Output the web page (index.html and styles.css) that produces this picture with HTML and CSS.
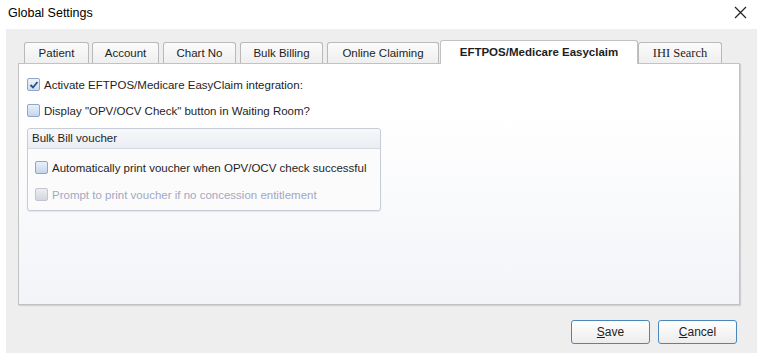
FILE: index.html
```html
<!DOCTYPE html>
<html lang="en">
<head>
  <meta charset="UTF-8">
  <title>Global Settings</title>
  <link rel="stylesheet" href="styles.css">
</head>
<body>
  <div class="titlebar">
    <span class="title">Global Settings</span>
    <svg class="close" width="13" height="13" viewBox="0 0 13 13">
      <path d="M1 1 L12 12 M12 1 L1 12" stroke="#222" stroke-width="1.2" fill="none"/>
    </svg>
  </div>

  <div class="dialog">
    <div class="tabs">
      <div class="tab t-patient">Patient</div>
      <div class="tab t-account">Account</div>
      <div class="tab t-chart">Chart No</div>
      <div class="tab t-bulk">Bulk Billing</div>
      <div class="tab t-online">Online Claiming</div>
      <div class="tab active t-eftpos">EFTPOS/Medicare Easyclaim</div>
      <div class="tab t-ihi">IHI Search</div>
    </div>

    <div class="panel">
      <label class="check">
        <span class="box checked">
          <svg width="10" height="10" viewBox="0 0 10 10"><path d="M1.5 5 L4 7.5 L8.5 2" stroke="#23508f" stroke-width="1.8" fill="none"/></svg>
        </span>
        Activate EFTPOS/Medicare EasyClaim integration:
      </label>
      <label class="check">
        <span class="box"></span>
        Display "OPV/OCV Check" button in Waiting Room?
      </label>

      <div class="group">
        <div class="group-head">Bulk Bill voucher</div>
        <div class="group-body">
          <label class="check">
            <span class="box"></span>
            Automatically print voucher when OPV/OCV check successful
          </label>
          <label class="check disabled">
            <span class="box"></span>
            Prompt to print voucher if no concession entitlement
          </label>
        </div>
      </div>
    </div>

    <div class="buttons">
      <button class="btn"><u>S</u>ave</button>
      <button class="btn"><u>C</u>ancel</button>
    </div>
  </div>
</body>
</html>
```

FILE: styles.css
```css
body {
  margin: 0;
  background: #fff;
  font-family: "Liberation Sans", Arial, sans-serif;
  font-size: 11.5px;
  color: #1e1e1e;
  width: 768px;
  height: 362px;
  overflow: hidden;
}
.titlebar {
  height: 29px;
  display: flex;
  align-items: center;
  justify-content: space-between;
  padding: 0 21px 0 8px;
}
.title {
  font-size: 12.5px;
  color: #000;
  margin-top: -4px;
}
.close {
  margin-top: -4px;
}
.dialog {
  margin-left: 6px;
  width: 751px;
  height: 324px;
  background: #eeeeee;
  box-sizing: border-box;
  padding: 11px 17px 0 12px;
}
.tabs {
  display: flex;
  align-items: flex-end;
  padding-left: 6px;
  height: 23px;
}
.tab {
  height: 21px;
  box-sizing: border-box;
  margin-right: 4px;
  border: 1px solid #b9b9b9;
  border-bottom: none;
  border-radius: 3px 3px 0 0;
  background: linear-gradient(#fbfbfb, #efefef);
  text-align: center;
  line-height: 20px;
  font-size: 11.5px;
}
.tab.active {
  height: 24px;
  background: #fff;
  font-weight: bold;
  margin-right: 0;
  margin-bottom: -1px;
  z-index: 2;
  line-height: 22px;
  border-color: #c2c2c2;
}
.t-patient { width: 65px; margin-right: 3px; }
.t-account { width: 67px; }
.t-chart { width: 73px; }
.t-bulk { width: 83px; }
.t-online { width: 112px; margin-right: 1px; }
.t-eftpos { width: 198px; }
.t-ihi {
  width: 84px;
  font-family: "Liberation Serif", "Times New Roman", serif;
  font-size: 12.5px;
}
.panel {
  height: 242px;
  box-sizing: border-box;
  border: 1px solid #c2c2c2;
  background: linear-gradient(#ffffff 20%, #f3f4f8);
  box-shadow: 1px 1px 1px rgba(0, 0, 0, 0.12);
  padding: 14px 0 0 8px;
}
.check {
  display: flex;
  align-items: center;
  gap: 4px;
  height: 13px;
  margin-bottom: 13px;
}
.group-body .check {
  margin-bottom: 14px;
}
.group-body .check:last-child {
  margin-bottom: 0;
}
.box {
  width: 11px;
  height: 11px;
  border: 1px solid #8fa6c6;
  border-radius: 2px;
  background: linear-gradient(#e9f0f9, #c3d6ee);
  display: flex;
  align-items: center;
  justify-content: center;
  flex: none;
}
.box.checked {
  background: linear-gradient(#eef3fa, #cfdcf0);
}
.disabled {
  color: #a3a8c2;
}
.disabled .box {
  border-color: #c3c6d0;
  background: linear-gradient(#eceef2, #d3d6de);
}
.group {
  width: 352px;
  margin-top: -2px;
  border: 1px solid #c8ccd6;
  border-radius: 3px;
  background: #fbfbfc;
  box-shadow: 0 1px 1px rgba(0, 0, 0, 0.08);
}
.group-head {
  height: 19px;
  line-height: 19px;
  padding-left: 4px;
  border-bottom: 1px solid #d6d9e2;
  background: linear-gradient(#f7f8fb, #eaedf3);
  border-radius: 3px 3px 0 0;
}
.group-body {
  padding: 12px 0 9px 7px;
}
.buttons {
  display: flex;
  justify-content: flex-end;
  gap: 8px;
  padding: 15px 3px 0 0;
}
.btn {
  width: 79px;
  height: 24px;
  border: 1px solid #4a86bb;
  border-radius: 3px;
  background: linear-gradient(#ffffff, #ececec);
  font-family: "Liberation Sans", Arial, sans-serif;
  font-size: 12px;
  color: #1e1e1e;
  padding: 0;
}
```
